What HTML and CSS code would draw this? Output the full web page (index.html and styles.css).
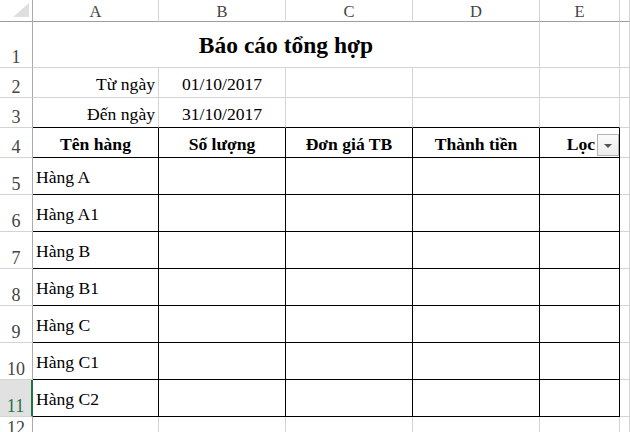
FILE: index.html
```html
<!DOCTYPE html>
<html lang="vi">
<head>
<meta charset="utf-8">
<title>Báo cáo tổng hợp</title>
<link rel="stylesheet" href="styles.css">
</head>
<body>
<div class="sheet">
  <div class="c corner"></div>
  <div class="c ch">A</div>
  <div class="c ch">B</div>
  <div class="c ch">C</div>
  <div class="c ch">D</div>
  <div class="c ch">E</div>
  <div class="c ch"></div>

  <div class="c rh">1</div>
  <div class="c title">Báo cáo tổng hợp</div>
  <div class="c"></div>
  <div class="c"></div>

  <div class="c rh">2</div>
  <div class="c right">Từ ngày</div>
  <div class="c center">01/10/2017</div>
  <div class="c"></div>
  <div class="c"></div>
  <div class="c"></div>
  <div class="c"></div>

  <div class="c rh">3</div>
  <div class="c right edge">Đến ngày</div>
  <div class="c center edge">31/10/2017</div>
  <div class="c edge"></div>
  <div class="c edge"></div>
  <div class="c edge"></div>
  <div class="c"></div>

  <div class="c rh">4</div>
  <div class="c tb hd">Tên hàng</div>
  <div class="c tb hd">Số lượng</div>
  <div class="c tb hd">Đơn giá TB</div>
  <div class="c tb hd">Thành tiền</div>
  <div class="c tb hd loc"><span>Lọc</span><span class="filter"><span class="arrow"></span></span></div>
  <div class="c"></div>

  <div class="c rh">5</div>
  <div class="c tb item">Hàng A</div>
  <div class="c tb"></div><div class="c tb"></div><div class="c tb"></div><div class="c tb"></div>
  <div class="c"></div>

  <div class="c rh">6</div>
  <div class="c tb item">Hàng A1</div>
  <div class="c tb"></div><div class="c tb"></div><div class="c tb"></div><div class="c tb"></div>
  <div class="c"></div>

  <div class="c rh">7</div>
  <div class="c tb item">Hàng B</div>
  <div class="c tb"></div><div class="c tb"></div><div class="c tb"></div><div class="c tb"></div>
  <div class="c"></div>

  <div class="c rh">8</div>
  <div class="c tb item">Hàng B1</div>
  <div class="c tb"></div><div class="c tb"></div><div class="c tb"></div><div class="c tb"></div>
  <div class="c"></div>

  <div class="c rh">9</div>
  <div class="c tb item">Hàng C</div>
  <div class="c tb"></div><div class="c tb"></div><div class="c tb"></div><div class="c tb"></div>
  <div class="c"></div>

  <div class="c rh">10</div>
  <div class="c tb item">Hàng C1</div>
  <div class="c tb"></div><div class="c tb"></div><div class="c tb"></div><div class="c tb"></div>
  <div class="c"></div>

  <div class="c rh sel">11</div>
  <div class="c tb item">Hàng C2</div>
  <div class="c tb"></div><div class="c tb"></div><div class="c tb"></div><div class="c tb"></div>
  <div class="c"></div>

  <div class="c rh">12</div>
  <div class="c"></div>
  <div class="c"></div>
  <div class="c"></div>
  <div class="c"></div>
  <div class="c"></div>
  <div class="c"></div>
</div>
</body>
</html>
```

FILE: styles.css
```css
html, body {
  margin: 0;
  padding: 0;
  height: 100%;
  overflow: hidden;
  background: #ffffff;
}

body {
  font-family: "Liberation Serif", serif;
  color: #000;
}

.sheet {
  display: grid;
  grid-template-columns: 33px 126px 127px 127px 127px 80px 1fr;
  grid-template-rows: 22px 46px 30px 30px 30px repeat(7, 37px) 22px;
  font-family: "Liberation Serif", serif;
}

.c {
  box-sizing: border-box;
  min-width: 0;
  overflow: hidden;
  white-space: nowrap;
  display: flex;
  align-items: flex-end;
  padding: 0 3px 3px 3px;
  border-right: 1px solid #d4d4d4;
  border-bottom: 1px solid #d4d4d4;
  font-family: "Liberation Serif", serif;
  font-size: 17.6px;
  line-height: 20px;
}

.corner {
  position: relative;
  border-right-color: #ababab;
  border-bottom-color: #9e9e9e;
  padding: 0;
}
.corner::after {
  content: "";
  position: absolute;
  right: 3px;
  bottom: 4px;
  width: 16px;
  height: 14px;
  background: #dfdfdf;
  clip-path: polygon(100% 0, 100% 100%, 0 100%);
}

.ch {
  justify-content: center;
  align-items: center;
  padding: 2px 0 0 0;
  font-size: 16.5px;
  color: #444;
  border-bottom-color: #9e9e9e;
}

.rh {
  justify-content: center;
  padding: 0;
  font-size: 18px;
  color: #444;
  border-right-color: #ababab;
}

.rh.sel {
  background: #e1e1e1;
  color: #217346;
  border-right: 2px solid #217346;
}

.title {
  grid-column: span 4;
  justify-content: center;
  align-items: center;
  padding: 0;
  font-weight: bold;
  font-size: 23.5px;
  line-height: 28px;
}

.right {
  justify-content: flex-end;
}

.center {
  justify-content: center;
}

.edge {
  border-bottom-color: #000;
}

.tb {
  border-right-color: #000;
  border-bottom-color: #000;
}

.hd {
  justify-content: center;
  font-weight: bold;
}

.loc {
  justify-content: flex-end;
  gap: 2px;
  padding-right: 0;
}

.filter {
  box-sizing: border-box;
  flex: none;
  width: 22px;
  height: 22px;
  margin-bottom: -2px;
  border: 1px solid #b4b4b4;
  background: linear-gradient(#fbfbfb, #ececec);
  display: flex;
  align-items: center;
  justify-content: center;
}

.arrow {
  width: 0;
  height: 0;
  border-left: 4px solid transparent;
  border-right: 4px solid transparent;
  border-top: 4px solid #555;
  margin-top: 1px;
}

.item {
  align-items: center;
  padding: 2px 3px 0 3px;
}
```
